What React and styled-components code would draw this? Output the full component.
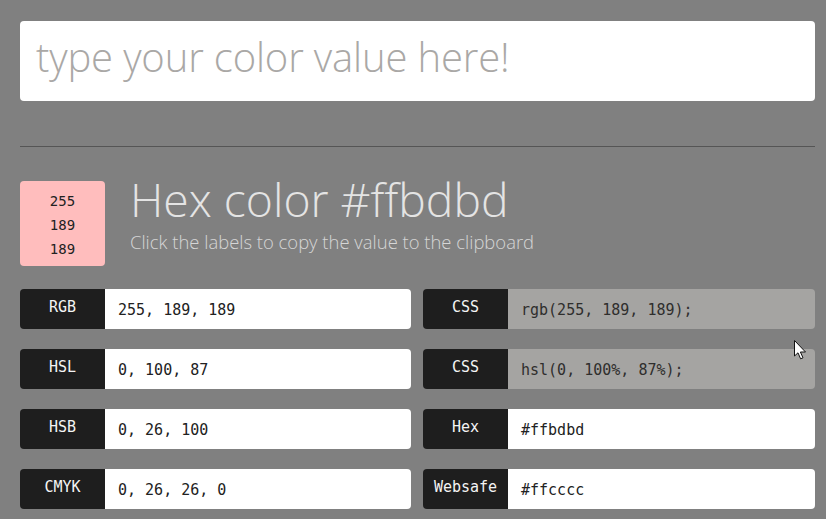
import React from "react";
import styled, { createGlobalStyle } from "styled-components";

const GlobalStyle = createGlobalStyle`
	html, body {
		margin: 0;
		height: 100%;
		overflow: hidden;
		background: #808080;
	}
	* {
		box-sizing: border-box;
	}
`;

const Page = styled.div`
	position: relative;
	padding: 21px 11px 0 20px;
	font-family: "Open Sans", "Liberation Sans", sans-serif;
`;

const ColorInput = styled.input`
	display: block;
	width: 100%;
	height: 80px;
	padding: 0 16px 9px;
	border: 0;
	border-radius: 4px;
	background: #fff;
	font-family: inherit;
	font-size: 40px;
	font-weight: 300;
	letter-spacing: -0.15px;
	outline: none;

	&::placeholder {
		color: #aaa8a6;
		opacity: 1;
	}
`;

const Rule = styled.hr`
	margin: 45px 0 34px;
	border: 0;
	border-top: 1px solid #555;
`;

const Summary = styled.div`
	display: flex;
	gap: 26px;
	margin-bottom: 23px;
`;

const Swatch = styled.div`
	flex: none;
	width: 85px;
	height: 85px;
	padding-top: 8px;
	border-radius: 4px;
	background: #ffbdbd;
	color: #222;
	font-family: "DejaVu Sans Mono", monospace;
	font-size: 14px;
	line-height: 24px;
	text-align: center;
`;

const Heading = styled.h1`
	margin: -8px 0 0 -1px;
	color: #e4e4e4;
	font-size: 46.3px;
	font-weight: 300;
	line-height: 54px;
`;

const Subtitle = styled.p`
	margin: 3px 0 0 -1px;
	color: #d6d6d6;
	font-size: 18.45px;
	font-weight: 300;
	line-height: 24px;
`;

const Values = styled.div`
	display: grid;
	grid-template-columns: 391px 392px;
	column-gap: 12px;
	row-gap: 20px;
`;

const Field = styled.div`
	display: flex;
	height: 40px;
	border-radius: 4px;
	overflow: hidden;
	font-family: "DejaVu Sans Mono", monospace;
	font-size: 15px;
`;

const Label = styled.span`
	flex: none;
	width: 85px;
	padding-top: 8px;
	background: #1e1e1e;
	color: #f4f4f4;
	line-height: 20px;
	text-align: center;
	cursor: pointer;
`;

const Value = styled.span`
	flex: 1;
	padding: 11px 0 0 13px;
	background: ${props => (props.$muted ? "#a5a4a2" : "#fff")};
	color: ${props => (props.$muted ? "#2f2e2d" : "#222")};
	line-height: 20px;
`;

const Pointer = styled.svg`
	position: absolute;
	left: 794px;
	top: 340px;
`;

const fields = [
	["RGB", "255, 189, 189"],
	["CSS", "rgb(255, 189, 189);", true],
	["HSL", "0, 100, 87"],
	["CSS", "hsl(0, 100%, 87%);", true],
	["HSB", "0, 26, 100"],
	["Hex", "#ffbdbd"],
	["CMYK", "0, 26, 26, 0"],
	["Websafe", "#ffcccc"]
];

const App = () => {
	return (
		<Page>
			<GlobalStyle />
			<ColorInput placeholder="type your color value here!" />
			<Rule />
			<Summary>
				<Swatch>
					255
					<br />
					189
					<br />
					189
				</Swatch>
				<div>
					<Heading>Hex color #ffbdbd</Heading>
					<Subtitle>Click the labels to copy the value to the clipboard</Subtitle>
				</div>
			</Summary>
			<Values>
				{fields.map(([label, value, muted], i) => (
					<Field key={i}>
						<Label>{label}</Label>
						<Value $muted={muted}>{value}</Value>
					</Field>
				))}
			</Values>
			<Pointer width="13" height="20" viewBox="0 0 13 20">
				<path
					d="M0.5 0.5 L0.5 16 L4 12.8 L6.6 18.8 L9 17.8 L6.4 12 L11.5 12 Z"
					fill="#fff"
					stroke="#111"
					strokeWidth="1"
				/>
			</Pointer>
		</Page>
	);
};

export default App;
